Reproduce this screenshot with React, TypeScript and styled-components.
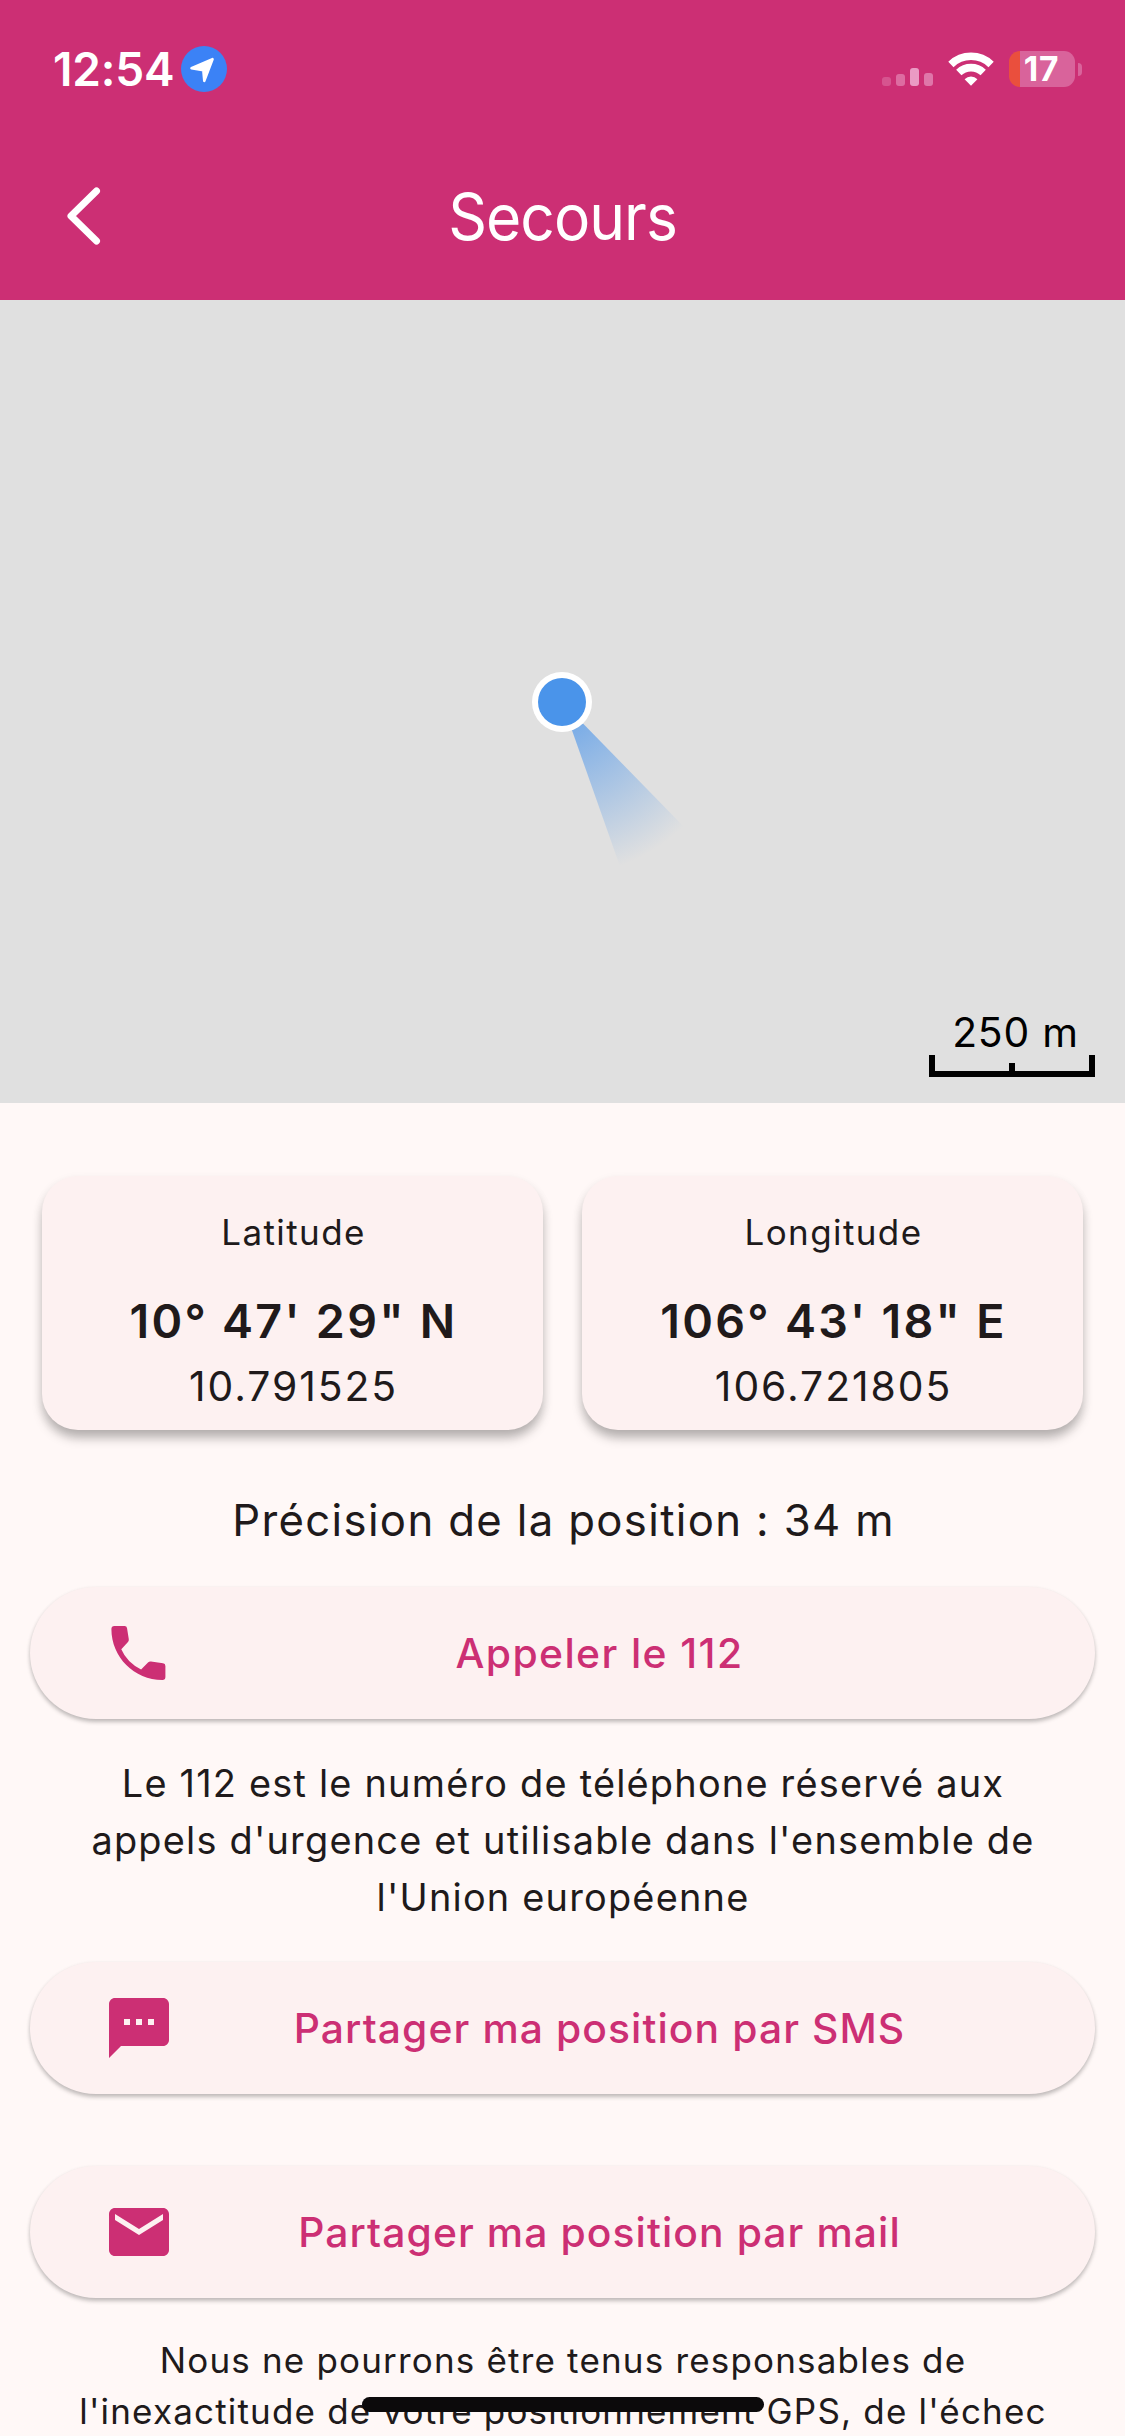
import React from 'react';
import styled, { createGlobalStyle } from 'styled-components';

const pink = '#cc2f74';
const ink = '#201a1b';
const surface = '#fdf1f1';
const page = '#fff8f7';

const GlobalStyle = createGlobalStyle`
  html, body { margin: 0; padding: 0; background: ${page}; }
  * { box-sizing: border-box; }
`;

const Screen = styled.div`
  position: relative;
  display: flex;
  flex-direction: column;
  width: 1125px;
  height: 2436px;
  overflow: hidden;
  background: ${page};
  color: ${ink};
  font-family: Inter, Roboto, 'Liberation Sans', sans-serif;
`;

const Header = styled.header`
  flex: none;
  height: 300px;
  background: ${pink};
  color: #fff;
`;

const StatusBar = styled.div`
  display: flex;
  align-items: center;
  height: 138px;
  padding: 0 43px 0 53px;
`;

const Time = styled.div`
  width: 128px;
  font-size: 46px;
  font-weight: 600;
  letter-spacing: -0.2px;
`;

const StatusIcons = styled.div`
  display: flex;
  align-items: center;
  margin-left: auto;
`;

const Signal = styled.div`
  display: flex;
  align-items: flex-end;
  gap: 5px;
  height: 33px;
  margin-right: 15px;
`;

const SignalBar = styled.span<{ $height: number; $alpha: number }>`
  width: 9px;
  height: ${p => p.$height}px;
  border-radius: 3px;
  background: rgba(255, 235, 255, ${p => p.$alpha});
`;

const WifiIcon = styled.svg`
  display: block;
  width: 46px;
  height: 34px;
  margin-right: 15px;
`;

const Battery = styled.div`
  display: flex;
  align-items: center;
  justify-content: center;
  width: 66px;
  height: 36px;
  padding-right: 1px;
  border-radius: 11px;
  background: linear-gradient(90deg, #ea4f3d 11px, #d9639b 11px);
  font-size: 33.5px;
  font-weight: 700;
  line-height: 36px;
  letter-spacing: 0.8px;
`;

const BatteryTip = styled.span`
  width: 4px;
  height: 13px;
  margin-left: 3px;
  border-radius: 0 5px 5px 0;
  background: #d9639b;
`;

const NavBar = styled.div`
  display: grid;
  grid-template-columns: 168px 1fr 168px;
  align-items: center;
  height: 162px;
  padding-bottom: 5px;
`;

const BackButton = styled.button`
  display: flex;
  justify-content: center;
  padding: 0 0 2px;
  border: 0;
  background: none;
  color: inherit;
`;

const Title = styled.h1`
  margin: 0;
  text-align: center;
  font-size: 64px;
  font-weight: 400;
  letter-spacing: -1px;
  transform: scaleX(0.945);
`;

const MapPanel = styled.section`
  position: relative;
  display: flex;
  flex: none;
  flex-direction: column;
  align-items: flex-end;
  justify-content: flex-end;
  height: 803px;
  padding: 0 30px 26px 0;
  background: #e0e0e0;
  color: #000;
`;

const LocationMarker = styled.svg`
  position: absolute;
  left: 362px;
  top: 202px;
`;

const ScaleLabel = styled.div`
  width: 166px;
  padding-left: 7px;
  text-align: center;
  font-size: 40.8px;
  line-height: 46px;
  letter-spacing: 0.8px;
`;

const ScaleRule = styled.div`
  display: flex;
  justify-content: center;
  align-items: flex-end;
  width: 166px;
  height: 22px;
  border: 6px solid #000;
  border-top: 0;
`;

const ScaleTick = styled.span`
  width: 6px;
  height: 8px;
  background: #000;
`;

const Content = styled.main`
  display: flex;
  flex-direction: column;
  padding: 73px 30px 0;
`;

const Cards = styled.div`
  display: grid;
  grid-template-columns: 1fr 1fr;
  gap: 39px;
  padding: 0 12px;
`;

const Card = styled.div`
  display: flex;
  flex-direction: column;
  height: 254px;
  padding: 29px 0 0 2px;
  border-radius: 36px;
  background: ${surface};
  box-shadow: 0 9px 11px -1px rgba(0, 0, 0, 0.26), 0 4px 11px rgba(0, 0, 0, 0.07);
  text-align: center;
`;

const CardLabel = styled.div`
  font-size: 35px;
  line-height: 54px;
  letter-spacing: 1.4px;
`;

const Degrees = styled.div`
  margin-top: 32px;
  font-size: 46.6px;
  font-weight: 600;
  line-height: 60px;
  letter-spacing: 2.25px;
`;

const Decimal = styled.div`
  margin-top: 5px;
  font-size: 40.8px;
  line-height: 60px;
  letter-spacing: 1.95px;
`;

const Precision = styled.p`
  margin: 61px 0 36px;
  padding-left: 2px;
  text-align: center;
  font-size: 43.7px;
  line-height: 60px;
  letter-spacing: 1.35px;
`;

const ActionButton = styled.button<{ $spacing?: number }>`
  display: flex;
  align-items: center;
  height: 132px;
  padding: 0 71px 0 73px;
  border: 0;
  border-radius: 66px;
  background: ${surface};
  box-shadow: 0 3px 4px rgba(0, 0, 0, 0.23), 0 1px 4px rgba(0, 0, 0, 0.05);
  color: ${pink};
  font-family: inherit;
  font-size: 40.8px;
  font-weight: 500;
  letter-spacing: ${p => p.$spacing ?? 1.1}px;

  & + & { margin-top: 72px; }
`;

const ActionIcon = styled.svg`
  flex: none;
  width: 72px;
  height: 72px;
  fill: currentColor;
`;

const ActionLabel = styled.span`
  flex: 1;
  text-align: center;
`;

const Note = styled.p`
  margin: 36px 0;
  padding: 0 35px 0 36px;
  text-align: center;
  font-size: 37.9px;
  line-height: 57px;
  letter-spacing: 1.21px;
`;

const Disclaimer = styled.p`
  margin: 37px 0 0;
  padding: 0 35px 0 36px;
  text-align: center;
  font-size: 35px;
  line-height: 51px;
  letter-spacing: 1.18px;
`;

const HomeIndicator = styled.div`
  position: absolute;
  left: 362px;
  bottom: 24px;
  width: 402px;
  height: 15px;
  border-radius: 8px;
  background: #0c0a0b;
`;

const signalBars = [
  { height: 9, alpha: 0.2 },
  { height: 12, alpha: 0.33 },
  { height: 18, alpha: 0.58 },
  { height: 13, alpha: 0.38 },
];

const coordinates = [
  { label: 'Latitude', degrees: `10° 47' 29" N`, decimal: '10.791525' },
  { label: 'Longitude', degrees: `106° 43' 18" E`, decimal: '106.721805' },
];

const icons = {
  phone: 'M3.8 3H7.2Q7.9 3 8 3.7L8.6 7.4Q8.68 8 8.25 8.45L6.1 10.75Q7.95 15.1 12.7 17.5L15 15.2Q15.4 14.8 16 14.87L20 15.4Q20.8 15.5 20.8 16.3V20Q20.8 21 19.8 21C10.4 21 2.8 13.4 2.8 4Q2.8 3 3.8 3z',
  sms: 'M20 2H4c-1.1 0-1.99.9-1.99 2L2 22l4-4h14c1.1 0 2-.9 2-2V4c0-1.1-.9-2-2-2zM9 11H7V9h2v2zm4 0h-2V9h2v2zm4 0h-2V9h2v2z',
  mail: 'M20 4H4c-1.1 0-1.99.9-1.99 2L2 18c0 1.1.9 2 2 2h16c1.1 0 2-.9 2-2V6c0-1.1-.9-2-2-2zm0 4l-8 5-8-5V6l8 5 8-5v2z',
};

function Action({ icon, label, spacing }: { icon: keyof typeof icons; label: string; spacing?: number }) {
  return (
    <ActionButton $spacing={spacing}>
      <ActionIcon viewBox="0 0 24 24"><path d={icons[icon]} /></ActionIcon>
      <ActionLabel>{label}</ActionLabel>
    </ActionButton>
  );
}

export default function App() {
  return (
    <Screen>
      <GlobalStyle />
      <Header>
        <StatusBar>
          <Time>12:54</Time>
          <svg width="46" height="46" viewBox="0 0 46 46">
            <circle cx="23" cy="23" r="23" fill="#3b82f6" />
            <path d="M10.5 22.3L31.5 13.2L23.3 34.8L22.3 24.2Z" fill="#fff" stroke="#fff" strokeWidth="2.6" strokeLinejoin="round" />
          </svg>
          <StatusIcons>
            <Signal>
              {signalBars.map((bar, i) => <SignalBar key={i} $height={bar.height} $alpha={bar.alpha} />)}
            </Signal>
            <WifiIcon viewBox="0 0 46 34">
              <g fill="none" stroke="#fff" strokeWidth="7.6">
                <path d="M2.9 12.4A29 29 0 0 1 43.1 12.4" />
                <path d="M10.8 20.5A17.6 17.6 0 0 1 35.2 20.5" />
              </g>
              <path d="M16.6 27.2A9.2 9.2 0 0 1 29.4 27.2L23 33.7Z" fill="#fff" />
            </WifiIcon>
            <Battery>17</Battery>
            <BatteryTip />
          </StatusIcons>
        </StatusBar>
        <NavBar>
          <BackButton aria-label="Retour">
            <svg width="40" height="62" viewBox="0 0 40 62" fill="none" stroke="#fff" strokeWidth="7" strokeLinecap="round" strokeLinejoin="round">
              <path d="M32.5 6L7 31L32.5 56" />
            </svg>
          </BackButton>
          <Title>Secours</Title>
        </NavBar>
      </Header>

      <MapPanel>
        <LocationMarker width="400" height="400" viewBox="-200 -200 400 400">
          <defs>
            <radialGradient id="beam" gradientUnits="userSpaceOnUse" cx="0" cy="0" r="174">
              <stop offset="0" stopColor="#4a94ea" stopOpacity="0.8" />
              <stop offset="1" stopColor="#4a94ea" stopOpacity="0" />
            </radialGradient>
          </defs>
          <path d="M0 0L60 170A180 180 0 0 0 126 129Z" fill="url(#beam)" />
          <circle r="30" fill="#fff" />
          <circle r="24" fill="#4a94ea" />
        </LocationMarker>
        <ScaleLabel>250 m</ScaleLabel>
        <ScaleRule><ScaleTick /></ScaleRule>
      </MapPanel>

      <Content>
        <Cards>
          {coordinates.map(c => (
            <Card key={c.label}>
              <CardLabel>{c.label}</CardLabel>
              <Degrees>{c.degrees}</Degrees>
              <Decimal>{c.decimal}</Decimal>
            </Card>
          ))}
        </Cards>
        <Precision>Précision de la position : 34 m</Precision>
        <Action icon="phone" label="Appeler le 112" spacing={1.4} />
        <Note>Le 112 est le numéro de téléphone réservé aux appels d'urgence et utilisable dans l'ensemble de l'Union européenne</Note>
        <Action icon="sms" label="Partager ma position par SMS" />
        <Action icon="mail" label="Partager ma position par mail" />
        <Disclaimer>Nous ne pourrons être tenus responsables de l'inexactitude de votre positionnement GPS, de l'échec</Disclaimer>
      </Content>
      <HomeIndicator />
    </Screen>
  );
}
